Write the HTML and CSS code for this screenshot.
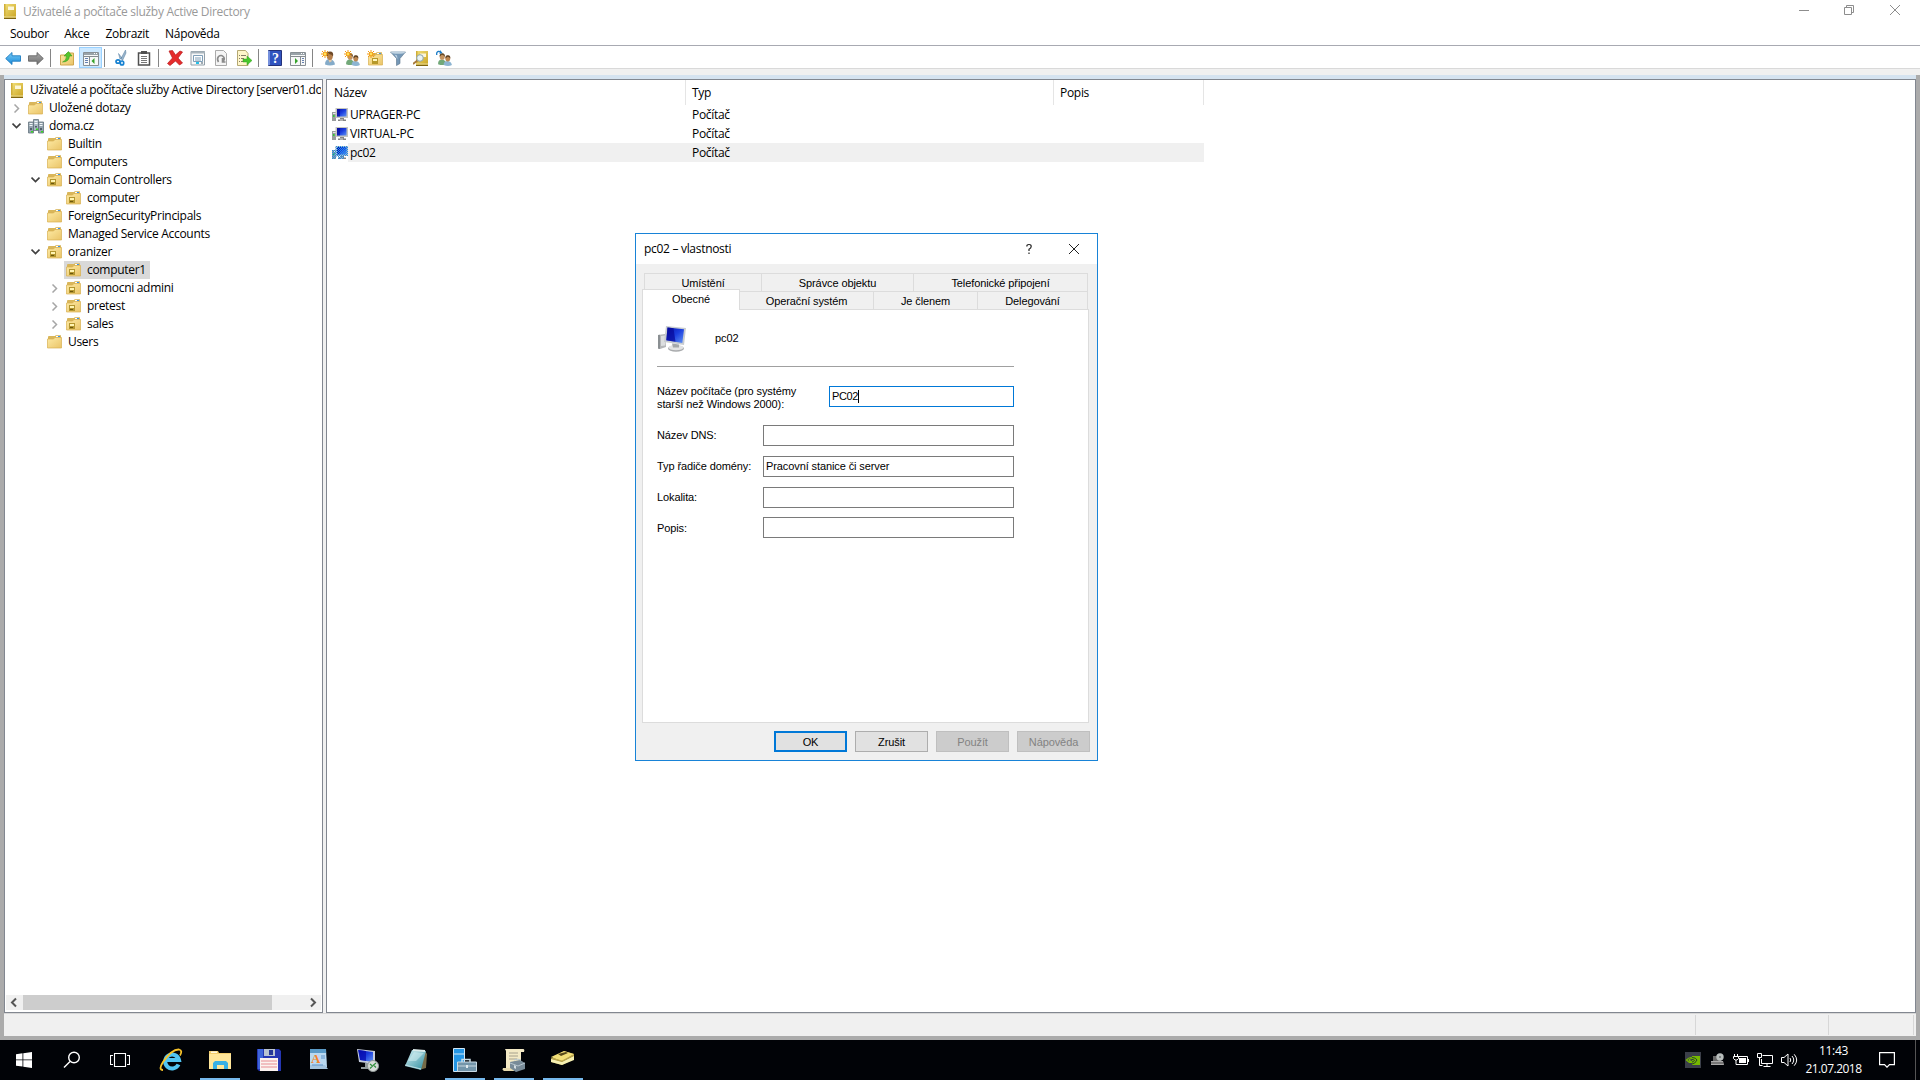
FILE: index.html
```html
<!DOCTYPE html>
<html lang="cs">
<head>
<meta charset="utf-8">
<title>Uživatelé a počítače služby Active Directory</title>
<link rel="stylesheet" href="styles.css">
</head>
<body>
<svg class="defs" width="0" height="0">
<defs>
<linearGradient id="gFolder" x1="0" y1="0" x2="1" y2="1"><stop offset="0" stop-color="#fdeaa4"/><stop offset="1" stop-color="#eac468"/></linearGradient>
<linearGradient id="gBook" x1="0" y1="0" x2="1" y2="1"><stop offset="0" stop-color="#f0dd75"/><stop offset="1" stop-color="#cda829"/></linearGradient>
<linearGradient id="gScreen" x1="0" y1="0" x2="1" y2="1"><stop offset="0" stop-color="#0712a8"/><stop offset=".5" stop-color="#1c3fe0"/><stop offset="1" stop-color="#5f92f2"/></linearGradient>
<linearGradient id="gBlue" x1="0" y1="0" x2="0" y2="1"><stop offset="0" stop-color="#7ccdf7"/><stop offset="1" stop-color="#1588d8"/></linearGradient>
<linearGradient id="gGray" x1="0" y1="0" x2="0" y2="1"><stop offset="0" stop-color="#a8a8a8"/><stop offset="1" stop-color="#6f6f6f"/></linearGradient>
<linearGradient id="gPad" x1="0" y1="0" x2="1" y2="1"><stop offset="0" stop-color="#d5f1f5"/><stop offset="1" stop-color="#2d8d9e"/></linearGradient>
<pattern id="pDots" width="2" height="2" patternUnits="userSpaceOnUse"><rect width="1" height="1" fill="#1e8cec"/><rect x="1" y="1" width="1" height="1" fill="#1e8cec"/></pattern>
</defs>
<symbol id="book" viewBox="0 0 12 15"><path d="M0 1h12v13.500H0z" fill="#a5861c"/><path d="M1 0h11v12.500H1z" fill="url(#gBook)"/><path d="M0 0h1.500v13H0z" fill="#cfae3a"/><path d="M4 2.500h6v3.500H4z" fill="#fbf6da"/><path d="M0 12.500h12v1H0z" fill="#fff0a5"/><path d="M0 14h12v1H0z" fill="#7e6410"/></symbol>
<symbol id="folder" viewBox="0 0 15 14"><path d="M1 3V2q0-1 1-1h6l1-1h4q1 0 1 1v12H1z" fill="#d9b65a"/><path d="M9 .8h4v1.500H9z" fill="#fff"/><path d="M11 1h2v1h-2z" fill="#3b93e8"/><path d="M.5 4h6l1.500-1.500h6.500v10.500H.5z" fill="url(#gFolder)" stroke="#d8b052" stroke-width=".7"/></symbol>
<symbol id="ou" viewBox="0 0 15 14"><use href="#folder" width="15" height="14"/><path d="M3 6h6v6H3z" fill="#b39630"/><path d="M4 7h4v2H4z" fill="#fff4b2"/><path d="M4 10h3v1H4z" fill="#6d570c"/></symbol>
<symbol id="domain" viewBox="0 0 16 15"><g stroke="#65737e" stroke-width=".8"><path d="M5.500.5h5v11h-5z" fill="#a9b8c2"/><path d="M.5 3h5v11h-5z" fill="#94a3ae"/><path d="M10.500 3h5v11h-5z" fill="#94a3ae"/></g><path d="M1.500 4.500h3M1.500 6.500h3M11.500 4.500h3M11.500 6.500h3M6.500 2.500h3M6.500 4.500h3" stroke="#f4f8fa"/><path d="M2 9h2v2H2zM12 9h2v2h-2zM7 7h2v1.500H7z" fill="#53606b"/><path d="M3 12h2v1.500H3zM13 12h2v1.500h-2zM8 9.500h2v1.500H8z" fill="#35d821"/></symbol>
<symbol id="pc" viewBox="0 0 16 14"><path d="M0 4h4v9H0z" fill="#989c9c"/><path d="M1 5h3v1H1z" fill="#e4e7e6"/><path d="M1 7h1.500v2H1z" fill="#30cc32"/><path d="M3.500 0H16v10H3.500z" fill="#c4c5bf"/><path d="M5 1h9.500v7.500H5z" fill="url(#gScreen)"/><path d="M5 1h3v7.500H5z" fill="#06069a" opacity=".6"/><path d="M8 10h4v1.500h2V13H6v-1.500h2z" fill="#858585"/><path d="M8 11.500h3v1H8z" fill="#ddd"/></symbol>
<symbol id="bigpc" viewBox="0 0 29 26"><path d="M0 9l7-1 1 13-6 2-2-.5z" fill="#b4b6b8"/><path d="M0 9l2-.3V23l-2-.5z" fill="#8a8f92"/><path d="M3 10l4-.6v10L3 20z" fill="#dcdedf"/><path d="M8 0l20 2-2 17L6 16z" fill="#c8ccd0"/><path d="M9.500 1.500L26 3.300 24.300 17 8.300 14.300z" fill="url(#gScreen)"/><path d="M9.500 1.500l6 .7 2 13.600-9.200-1.500z" fill="#070799" opacity=".7"/><ellipse cx="18" cy="22.500" rx="8" ry="3.300" fill="#a9abad"/><ellipse cx="18" cy="21.600" rx="7.500" ry="2.700" fill="#e2e3e4"/><path d="M14 17.500l7 1v3h-6z" fill="#a3a7aa"/></symbol>
<symbol id="panel" viewBox="0 0 16 14"><path d="M.5.500h15v13H.5z" fill="#f7f8f8" stroke="#888f94"/><path d="M1 1h14v2H1z" fill="#9aa3a9"/><path d="M11 1h1v1h-1zM13 1h1v1h-1z" fill="#fff"/><path d="M1 4.500h14" stroke="#858b90"/></symbol>
<symbol id="person" viewBox="0 0 12 14"><path d="M1 13q0-5 4-5.500 5 0 6 5.500-5 2-10 0z" fill="#84abc9"/><path d="M4 7h4l-.5 3-2 1z" fill="#e3c7a6"/><ellipse cx="5.800" cy="4.500" rx="3" ry="4" fill="#b47e4b"/><path d="M2.500 4Q2 0 6 0t3 5Q8 2.500 5 2.500L3 5z" fill="#6e4927"/></symbol>
<symbol id="people" viewBox="0 0 15 14"><path d="M0 12q0-5 4-5t5 5q-4 2-9 0z" fill="#72a878"/><ellipse cx="4.500" cy="4" rx="2.700" ry="3.400" fill="#c49360"/><path d="M1.800 4Q1.300.2 4.500.2t2.800 4Q6 2 4 2z" fill="#654a27"/><path d="M6 13q0-4.500 4-4.500t5 4.500q-4 2-9 0z" fill="#8cb4d1"/><ellipse cx="10.500" cy="6" rx="2.600" ry="3.200" fill="#bd8650"/><path d="M8 6q-.5-3.700 2.600-3.700T13.200 6q-1-2-3-2z" fill="#5e4225"/></symbol>
<symbol id="spark" viewBox="0 0 8 8"><path d="M4 0v8M0 4h8M1 1l6 6M7 1L1 7" stroke="#f39a14" stroke-width="1"/><circle cx="4" cy="4" r="2" fill="#f7a71c"/><circle cx="4" cy="4" r="1.200" fill="#ffe35c"/></symbol>
</svg>

<div class="window">
  <header class="titlebar">
    <svg class="app-icon" width="12" height="15"><use href="#book"/></svg>
    <span class="title">Uživatelé a počítače služby Active Directory</span>
    <svg class="caption-buttons" width="104" height="12" fill="none" stroke="#8d8d8d"><path d="M0 6.500h10M45.500 3.500h7v7h-7zM47.500 3V1.500h7v7H53M91 1l10 10M101 1L91 11"/></svg>
  </header>
  <nav class="menu"><span>Soubor</span><span class="akce">Akce</span><span>Zobrazit</span><span>Nápověda</span></nav>
  <div class="toolbar">
    <span class="tool"><svg width="16" height="16"><path d="M.7 8.500L7 2.500v3.300h8.500v5.400H7v3.300z" fill="url(#gBlue)" stroke="#1e7cc0" stroke-width=".9"/></svg></span>
    <span class="tool"><svg width="16" height="16"><path d="M15.300 8.500L9 2.500v3.300H.5v5.400H9v3.300z" fill="url(#gGray)" stroke="#666" stroke-width=".9"/></svg></span>
    <i class="sep"></i>
    <span class="tool"><svg width="16" height="16"><path d="M1.500 5h5l1.500-2h6.500v12h-13z" fill="url(#gFolder)" stroke="#d0a64c"/><path d="M3.500 12q4-1 4-6H5l4.500-4.500L13 6h-2.500q-.5 6-7 6z" fill="#54c52e" stroke="#299417" stroke-width=".5"/></svg></span>
    <span class="tool active"><svg width="16" height="16"><g transform="translate(0 2)"><use href="#panel" width="16" height="14"/><path d="M6.500 5v8" stroke="#858b90"/><path d="M2 6.500h3M2 8.500h3M2 10.500h3" stroke="#6680b0"/><path d="M11.500 6v6L8.500 9z" fill="#35a22a"/></g></svg></span>
    <i class="sep"></i>
    <span class="tool"><svg width="16" height="16"><path d="M12.500 0L8 8.500l1.500 2L13 3zM5.500 3.500L7 9l2-1z" fill="#9ab5cc" stroke="#557c9e" stroke-width=".5"/><g fill="none" stroke="#1681d1" stroke-width="1.700"><ellipse cx="5" cy="11.500" rx="2" ry="1.700"/><ellipse cx="9" cy="13" rx="1.700" ry="2"/></g></svg></span>
    <span class="tool"><svg width="16" height="16"><path d="M2.500 3h11v12h-11z" fill="#fff" stroke="#505050" stroke-width="1.500"/><path d="M5 1h6v3H5z" fill="#505050"/><path d="M5 6.500h6M5 8.500h6M5 10.500h6M5 12.500h6" stroke="#777"/></svg></span>
    <i class="sep"></i>
    <span class="tool"><svg width="16" height="16"><path d="M2 1l3.500-.5L8.500 5 13 1l2.500 1-4.500 6 4.500 5-3 2L8.500 11 3 15.500.5 13.500 5.500 8z" fill="#e52b2b" stroke="#b91a1d" stroke-width=".7"/></svg></span>
    <span class="tool"><svg width="16" height="16"><path d="M1 1.500h13.500v13.500H1z" fill="#f8f9fa" stroke="#929fa8"/><path d="M1 2.500h14" stroke="#a9b4bc" stroke-width="2"/><path d="M3.500 5.500h9v6h-9zM5 8h6M5 10h6" fill="#fff" stroke="#7f9fb8"/><path d="M6 13h3" stroke="#26c0e7" stroke-width="2"/><path d="M11 13h2" stroke="#9faab2" stroke-width="2"/></svg></span>
    <span class="tool"><svg width="16" height="16"><path d="M2.500.5h8L13.500 3.500v12h-11z" fill="#f5f5f5" stroke="#aaa"/><path d="M5.500 12Q3.500 9 5.500 6.500 8.500 4 11 7.500 12 10 9.500 11.500M9.500 8v4h3" fill="none" stroke="#8b8b8b" stroke-width="1.600"/></svg></span>
    <span class="tool"><svg width="16" height="16"><path d="M1.500.5h8L12 3.500v12H1.500z" fill="#fff6ca" stroke="#b5a873"/><path d="M3 5.500h1M5 5.500h5M3 8.500h1M5 8.500h3M3 11.500h1M5 11.500h3" stroke="#847c68"/><path d="M7 9h4V6l5 4.500-5 4.500v-3H7z" fill="#48c62c" stroke="#36a023" stroke-width=".5"/></svg></span>
    <i class="sep"></i>
    <span class="tool"><svg width="16" height="16"><path d="M1.500.5h13v15h-13z" fill="#3154bf" stroke="#24327a"/><path d="M1 1h2v14H1z" fill="#7590dd"/><text x="8.500" y="13" class="help-mark">?</text></svg></span>
    <span class="tool"><svg width="16" height="16"><g transform="translate(0 2)"><use href="#panel" width="16" height="14"/><path d="M10.500 5v8" stroke="#858b90"/><path d="M12 6.500h2M12 8.500h2M12 10.500h2" stroke="#6680b0"/><path d="M5 6v6l3-3z" fill="#35a22a"/></g></svg></span>
    <i class="sep"></i>
    <span class="tool"><svg width="16" height="16"><use href="#person" x="3" y="1" width="12" height="15"/><use href="#spark" x="0" y="0" width="8" height="8"/></svg></span>
    <span class="tool"><svg width="16" height="16"><use href="#people" x="2" y="3" width="14" height="13"/><use href="#spark" x="0" y="0" width="8" height="8"/></svg></span>
    <span class="tool"><svg width="16" height="16"><use href="#folder" x="1" y="2" width="15" height="14"/><path d="M5 8h6v6H5z" fill="#b69829"/><path d="M6 9h4v2H6z" fill="#fff5bd"/><use href="#spark" x="0" y="0" width="8" height="8"/></svg></span>
    <span class="tool"><svg width="16" height="16"><path d="M.5 2h15L10 8.500v5L6.500 15.500v-7z" fill="#7598b7" stroke="#59748c" stroke-width=".6"/><ellipse cx="8" cy="2.500" rx="7" ry="1.300" fill="#bfd2e1"/><path d="M7.500 9l-3-4.500L7 5.500z" fill="#c3d8e9"/></svg></span>
    <span class="tool"><svg width="16" height="16"><use href="#book" x="3" y="1" width="12" height="15"/><path d="M0 14l5-4" stroke="#a6793d" stroke-width="1.800"/><circle cx="7" cy="8" r="3.300" fill="#e8f2f4" stroke="#8fa4aa"/></svg></span>
    <span class="tool"><svg width="16" height="16"><use href="#people" x="2" y="3" width="14" height="13"/><path d="M.7 5V3q1-2.500 4-1" fill="none" stroke="#1c7cc6" stroke-width="1.300"/><path d="M4 0l2.500 3L3.500 4z" fill="#1c7cc6"/></svg></span>
  </div>
  <div class="rebar-gap"></div>

  <div class="workspace">
    <section class="tree">
      <ul class="nodes">
        <li class="root"><svg width="12" height="15"><use href="#book"/></svg><span>Uživatelé a počítače služby Active Directory [server01.do</span></li>
        <li class="l1"><svg class="closed"><path d="M1.500.5l4 4-4 4"/></svg><svg width="15" height="14"><use href="#folder"/></svg><span>Uložené dotazy</span></li>
        <li class="l1 dom"><svg class="open"><path d="M.5 1.500l4 4 4-4"/></svg><svg width="16" height="15"><use href="#domain"/></svg><span>doma.cz</span></li>
        <li class="l2"><svg width="15" height="14"><use href="#folder"/></svg><span>Builtin</span></li>
        <li class="l2"><svg width="15" height="14"><use href="#folder"/></svg><span>Computers</span></li>
        <li class="l2"><svg class="open"><path d="M.5 1.500l4 4 4-4"/></svg><svg width="15" height="14"><use href="#ou"/></svg><span>Domain Controllers</span></li>
        <li class="l3"><svg width="15" height="14"><use href="#ou"/></svg><span>computer</span></li>
        <li class="l2"><svg width="15" height="14"><use href="#folder"/></svg><span>ForeignSecurityPrincipals</span></li>
        <li class="l2"><svg width="15" height="14"><use href="#folder"/></svg><span>Managed Service Accounts</span></li>
        <li class="l2"><svg class="open"><path d="M.5 1.500l4 4 4-4"/></svg><svg width="15" height="14"><use href="#ou"/></svg><span>oranizer</span></li>
        <li class="l3 selected"><svg width="15" height="14"><use href="#ou"/></svg><span>computer1</span></li>
        <li class="l3"><svg class="closed"><path d="M1.500.5l4 4-4 4"/></svg><svg width="15" height="14"><use href="#ou"/></svg><span>pomocni admini</span></li>
        <li class="l3"><svg class="closed"><path d="M1.500.5l4 4-4 4"/></svg><svg width="15" height="14"><use href="#ou"/></svg><span>pretest</span></li>
        <li class="l3"><svg class="closed"><path d="M1.500.5l4 4-4 4"/></svg><svg width="15" height="14"><use href="#ou"/></svg><span>sales</span></li>
        <li class="l2"><svg width="15" height="14"><use href="#folder"/></svg><span>Users</span></li>
      </ul>
      <div class="scrollbar">
        <svg class="arrow" width="17" height="15"><path d="M10 3.500l-4 4 4 4"/></svg>
        <div class="track"><div class="thumb"></div></div>
        <svg class="arrow" width="17" height="15"><path d="M7 3.500l4 4-4 4"/></svg>
      </div>
    </section>
    <section class="list">
      <div class="row head"><span class="c1">Název</span><span class="c2">Typ</span><span class="c3">Popis</span></div>
      <div class="row"><span class="c1"><svg width="16" height="14"><use href="#pc"/></svg><b class="up">UPRAGER-PC</b></span><span class="c2">Počítač</span><span class="c3"></span></div>
      <div class="row"><span class="c1"><svg width="16" height="14"><use href="#pc"/></svg><b class="up">VIRTUAL-PC</b></span><span class="c2">Počítač</span><span class="c3"></span></div>
      <div class="row current"><span class="c1"><svg width="16" height="14"><use href="#pc"/><path d="M3.500 0H16v10h-4v3H6v-2.500H4V13H0V4h3.500z" fill="url(#pDots)"/></svg><b>pc02</b></span><span class="c2">Počítač</span><span class="c3"></span></div>
    </section>
  </div>
  <footer class="status"><i class="s1"></i><i class="s2"></i><i class="s3"></i></footer>
</div>

<div class="dialog">
  <div class="dialog-title"><span>pc02 – vlastnosti</span><svg width="54" height="12" fill="none" stroke="#222"><path d="M.8 3.500Q.8 1.500 3 1.500t2.200 2Q5.200 5 3 6.300V8M3 9.500V11" stroke-width="1.200"/><path d="M43 1l10 10M53 1L43 11"/></svg></div>
  <div class="dialog-body">
    <div class="tabs back"><span class="t1">Umístění</span><span class="t2">Správce objektu</span><span class="t3">Telefonické připojení</span></div>
    <div class="tabs front"><span class="on">Obecné</span><span class="t4">Operační systém</span><span class="t5">Je členem</span><span class="t6">Delegování</span></div>
    <div class="page">
      <div class="ident"><svg width="29" height="26"><use href="#bigpc"/></svg><span>pc02</span></div>
      <div class="field first"><label>Název počítače (pro systémy<br>starší než Windows 2000):</label><div class="input focus"><span>PC02</span><i class="caret"></i></div></div>
      <div class="field"><label>Název DNS:</label><div class="input"></div></div>
      <div class="field"><label>Typ řadiče domény:</label><div class="input">Pracovní stanice či server</div></div>
      <div class="field"><label>Lokalita:</label><div class="input"></div></div>
      <div class="field last"><label>Popis:</label><div class="input"></div></div>
    </div>
    <div class="buttons"><span class="btn ok">OK</span><span class="btn">Zrušit</span><span class="btn off">Použít</span><span class="btn off">Nápověda</span></div>
  </div>
</div>

<div class="taskbar">
  <div class="start-area">
    <span class="task"><svg width="16" height="16" fill="#fff"><path d="M0 2.300L6.500 1.300v6.200H0zM7.300 1.200L16 0v7.500H7.300zM0 8.300h6.500v6.300L0 13.700zM7.300 8.300H16V16l-8.700-1.200z"/></svg></span>
    <span class="task"><svg width="18" height="18" fill="none" stroke="#fff" stroke-width="1.400"><circle cx="11" cy="6.500" r="5.300"/><path d="M7 10.500L1 16.500"/></svg></span>
    <span class="task"><svg width="20" height="16" fill="none" stroke="#fff"><path d="M4.500 1.500h11v13h-11zM3 3.500H.5v9H3M17 3.500h2.500v9H17" stroke-width="1.100"/></svg></span>
  </div>
  <div class="pinned">
    <span class="task"><svg width="24" height="24"><path d="M19.500 16.500A7 7 0 1 1 20 12H8" fill="none" stroke="#51c5f3" stroke-width="4"/><path d="M4 22Q-1 22 4 14 13 1 20 1.500q4 1 1 6" fill="none" stroke="#f7c32b" stroke-width="1.800"/></svg></span>
    <span class="task run"><svg width="24" height="24"><path d="M1 3h9l1 2h12v16H1z" fill="#f3cd6c"/><path d="M1 6h22v15H1z" fill="#ffe69a"/><path d="M3 3.500h6v1.500H3z" fill="#fff8df"/><path d="M5 21v-6l2-2h11l2 2v6h-4v-4H9v4z" fill="#38b0e5"/></svg></span>
    <span class="task"><svg width="24" height="24"><path d="M0 1h22l2 2v20H2l-2-2z" fill="#2536b2"/><path d="M1 1h5v20H1z" fill="#3e65da"/><path d="M7 1h11v7H7z" fill="#b9c3d1"/><path d="M12 2h4v5h-4z" fill="#253796"/><path d="M3 10h18v13H3z" fill="#fbf2ef"/><path d="M4 13h16M4 16h16M4 19h16" stroke="#e78c91"/></svg></span>
    <span class="task"><svg width="24" height="24"><path d="M4 1h16l1 18H4z" fill="#b9d8f0"/><path d="M4 1h16v4H4z" fill="#5a9ac7"/><path d="M4 17h15l3 4H4z" fill="#a4c4de"/><path d="M15 8h4M15 10h4M6 17h11" stroke="#5f92c8"/><text x="5" y="15" class="letter">A</text></svg></span>
    <span class="task"><svg width="24" height="24"><path d="M2 1l18 2v13L4 14z" fill="#c6cddd"/><path d="M3 2l15 2v10L5 12z" fill="url(#gScreen)"/><path d="M4 2l7 1v10l-6-1z" fill="#0508ae" opacity=".7"/><path d="M10 15h5v3h3v3H6v-2h4z" fill="#929b9e"/><circle cx="18" cy="18" r="5.500" fill="#d8dcda" stroke="#929a99"/><path d="M15 16l2.500 2L15 20.500M21 15l-2.500 2 2.500 2.500" fill="none" stroke="#2f8f3b" stroke-width="1.200"/></svg></span>
    <span class="task"><svg width="24" height="24"><path d="M21 3l2 3-1 14-7 2z" fill="#756b48"/><path d="M8 2l14 1-5 19-16-4z" fill="url(#gPad)"/><path d="M9 2l12 1" stroke="#dcebea" stroke-width="2"/><path d="M10 4l10 1-8 8-8 0z" fill="#d9f2f4" opacity=".5"/><path d="M1 17l16 4" stroke="#bedde1"/></svg></span>
    <span class="task run"><svg width="24" height="24"><path d="M.5.500h11v23H.500z" fill="#2496e5" stroke="#d2e7f5"/><path d="M1 6h10" stroke="#d2e7f5"/><path d="M9 14v-2.500h8V14" fill="none" stroke="#c7dce6" stroke-width="1.500"/><path d="M4.500 14h19v9.500h-19z" fill="#7395aa" stroke="#c9dae4"/><path d="M5 18h18" stroke="#c6d6df"/><path d="M13 17h2v3h-2z" fill="#e1ebf0"/></svg></span>
    <span class="task run"><svg width="24" height="24"><path d="M3 1h18q2 0 1 3h-3v16H4V3z" fill="#f3e9c5"/><path d="M1 20h11v3H2q-2-1-1-3z" fill="#e6d9ac"/><path d="M7 5h9M7 8h9M7 11h8" stroke="#a6a08d"/><path d="M8 14l10-2 5 3v6l-9 3-6-4z" fill="#788b98"/><path d="M8 15l8 3 7-3M12 12l3-1 4 1" fill="none" stroke="#b8c7d0"/><path d="M12 17l2 1v3l-2-1z" fill="#d3dde2"/></svg></span>
    <span class="task run"><svg width="24" height="24"><g transform="translate(0 -1)"><path d="M0 12l13-8 10 3v5L11 18 0 15z" fill="#a69142"/><path d="M0 10l13-6 10 3-12 7z" fill="#f2df78"/><path d="M0 12l11 3v3L0 15zM11 15l12-6v4l-12 5z" fill="#f6f0b2"/><path d="M7 7l8-2 2 1-7 3z" fill="#57491a"/><path d="M0 11l11 3 12-6" fill="none" stroke="#bfab4e"/></g></svg></span>
  </div>
  <div class="tray">
    <svg width="16" height="16"><path d="M0 0h16v16H0z" fill="#3b3f49"/><path d="M7 4h8v9H7z" fill="#76b900"/><path d="M1.500 8Q6 3 10.500 8 6 13 1.500 8zM4 8q3-3 5 0-2 3-5 0" fill="none" stroke="#76b900" stroke-width="1.200"/><path d="M7 5.500q4 0 5 2.500-2 4-5 4M7 7.500q2 0 2.500.8-1 1.700-2.500 1.700" fill="none" stroke="#29402a"/></svg>
    <svg width="16" height="16"><g transform="translate(1)"><path d="M3 4h8v6H3z" fill="#686868"/><path d="M1 9h12l1 4H1z" fill="#aaa"/><path d="M1 11h12" stroke="#444"/><circle cx="10" cy="5" r="3.700" fill="#b8bebd"/><circle cx="10" cy="5" r="1" fill="#696f6f"/></g></svg>
    <svg width="16" height="16"><path d="M5 4.500h9.500v8H5" fill="none" stroke="#fff"/><path d="M6 6h7v5H6zM15 7h1v3h-1z" fill="#fff"/><path d="M1.500 2v3M4.500 2v3M3 8v4.500h3" stroke="#fff" fill="none"/><path d="M.5 4.500h5v2L4 8H2L.5 6.500z" fill="#000" stroke="#fff"/></svg>
    <svg width="16" height="16" fill="none" stroke="#fff"><path d="M5.500 3.500h10v8h-11V7M10 12v2.500M6.500 14.500h7M.500 1.500h4v4h-4zM2.500 6v7.500h3"/></svg>
    <svg width="17" height="16" fill="none" stroke="#fff"><path d="M.5 5.500h2.500L7 2v12L3 10.500H.5zM9 6q1.500 2 0 4M11 4q3.500 4 0 8M13.200 2.300q5 5.700 0 11.400"/></svg>
    <div class="clock"><span class="time">11:43</span><span class="date">21.07.2018</span></div>
    <svg class="notice" width="16" height="16" fill="none" stroke="#fff"><path d="M.6.600h14.800v12H10.500v0L8 15.200 5.500 12.600H.6z" stroke-width="1.200"/></svg>
    <i class="peek"></i>
  </div>
</div>
</body>
</html>
```
FILE: styles.css
```css
* { box-sizing: border-box; }
body { margin: 0; width: 1920px; height: 1080px; overflow: hidden; background: #fff; color: #000; font: 12px/18px "Open Sans", "Noto Sans", sans-serif; letter-spacing: -.3px; display: flex; flex-direction: column; white-space: nowrap; }
.defs { position: absolute; }
svg { flex: none; display: block; }
i { display: block; flex: none; }
b { font-weight: normal; }

.window { height: 1040px; display: flex; flex-direction: column; }
.titlebar { height: 24px; display: flex; align-items: flex-start; padding: 4px 0 0 4px; color: #999; }
.title { padding-left: 7px; margin-top: -1px; flex: 1; }
.caption-buttons { margin-right: 17px; }
.menu { height: 22px; padding: 1px 0 0 10px; display: flex; gap: 16px; border-bottom: 1px solid #a8aab2; }
.akce { margin-left: -.5px; }
.toolbar { height: 23px; display: flex; padding: 1px 0 0 2px; border-bottom: 1px solid #d9d9d9; }
.tool { width: 23px; height: 21px; display: flex; align-items: center; padding-left: 3px; }
.active { background: #cce8ff; border: 1px solid #99d1ff; }
.sep { width: 8px; height: 18px; margin-top: 2px; background: linear-gradient(#858585, #858585) 2px 0 / 1px 18px no-repeat; }
.help-mark { font: bold 14px "Liberation Serif", serif; fill: #fff; text-anchor: middle; letter-spacing: 0; }
.rebar-gap { height: 6px; background: #f0f0f0; }

.workspace { height: 938px; padding-top: 4px; display: flex; gap: 3px; background: #f0f0f0; border: solid #ababab; border-width: 0 4px; box-shadow: inset 0 4px #d5e3f0; }
.tree { width: 319px; height: 934px; border: 1px solid #828790; background: #fff; display: flex; flex-direction: column; justify-content: space-between; padding: 1px; }
.nodes { margin: 0; padding: 0; list-style: none; overflow: hidden; }
.nodes li { height: 18px; width: max-content; display: flex; align-items: center; }
.root { padding-left: 5px; gap: 7px; letter-spacing: -.37px; }
.l1, .l2, .l3 { gap: 6px; padding-right: 4px; }
.l1 { margin-left: 22px; }
.dom svg + svg { margin-left: 1px; }
.dom { gap: 5px; }
.l2 { margin-left: 41px; }
.l3 { margin-left: 58px; padding-left: 2px; }
.nodes .open, .nodes .closed { width: 9px; height: 9px; fill: none; stroke: #404040; stroke-width: 1.7; margin-left: -15px; }
.nodes .open { margin-left: -16px; margin-right: 1px; }
.nodes .closed { stroke: #a6a6a6; stroke-width: 1.5; }
.selected { background: #d9d9d9; }
.scrollbar { height: 15px; display: flex; background: #f0f0f0; margin-bottom: 1px; }
.arrow { fill: none; stroke: #555; stroke-width: 2; }
.track { flex: 1; }
.thumb { width: 249px; height: 15px; background: #cdcdcd; }

.list { flex: 1; height: 934px; border: 1px solid #828790; background: #fff; }
.row { display: flex; height: 19px; align-items: center; }
.row > span { display: flex; align-items: center; gap: 2px; height: 100%; }
.c1 { width: 359px; padding-left: 5px; }
.c2 { width: 368px; padding-left: 6px; }
.c3 { width: 150px; padding-left: 6px; }
.up { letter-spacing: -.2px; }
.head { height: 25px; }
.head > span { border-right: 1px solid #e5e5e5; }
.head .c1 { padding-left: 7px; }
.current { width: 877px; background: linear-gradient(90deg, #fff 21px, #f0f0f0 21px); }

.status { height: 27px; background: #f0f0f0; border: solid #ababab; border-width: 0 4px 4px; display: flex; justify-content: flex-end; padding-top: 2px; box-shadow: inset 0 1px #d7d7d7; }
.status i { height: 20px; border-right: 1px solid #d7d7d7; }
.s2 { width: 133px; }
.s3 { width: 85px; margin-right: 2px; }

.dialog { position: absolute; left: 635px; top: 233px; width: 463px; height: 528px; border: 1px solid #1883d7; background: #f0f0f0; font: 11px/13px "Liberation Sans", Arial, sans-serif; letter-spacing: -.1px; }
.dialog-title { height: 30px; background: #fff; display: flex; align-items: center; justify-content: space-between; padding: 0 17px 0 8px; font: 12px/18px "Open Sans", sans-serif; letter-spacing: -.3px; }
.dialog-body { padding: 9px 7px 0 6px; }
.tabs { display: flex; }
.tabs span { height: 18px; border: solid #dcdcdc; border-width: 1px 1px 0 0; text-align: center; padding-top: 3px; }
.back { padding-left: 2px; }
.back .t1 { width: 118px; border-left-width: 1px; }
.t2 { width: 152px; }
.t3 { width: 174px; }
.front .on { width: 98px; height: 21px; margin: -2px 0 -1px; background: #fff; border-left-width: 1px; position: relative; z-index: 1; }
.t4 { width: 134px; }
.t5 { width: 104px; }
.t6 { width: 110px; }
.page { height: 414px; width: 447px; background: #fff; border: 1px solid #dcdcdc; padding-left: 14px; }
.ident { height: 57px; width: 357px; display: flex; align-items: center; gap: 28px; padding: 2px 0 0 1px; border-bottom: 1px solid #a0a0a0; }
.ident span { margin-top: -1px; }
.field { display: flex; align-items: flex-start; width: 357px; height: 31px; }
.field label { width: 106px; padding-top: 4px; }
.input { flex: 1; height: 21px; border: 1px solid #7a7a7a; background: #fff; padding: 3px 2px; }
.first { margin-top: 19px; height: 39px; }
.first label { width: 172px; padding-top: 0; margin-top: -1px; }
.focus { border-color: #0078d7; display: flex; letter-spacing: -.4px; }
.caret { width: 1px; height: 13px; background: #000; }
.last { margin-top: -1px; }
.last label { padding-top: 5px; }
.buttons { display: flex; justify-content: flex-end; gap: 8px; padding-top: 8px; }
.btn { width: 73px; height: 21px; border: 1px solid #adadad; background: #e1e1e1; text-align: center; line-height: 20px; }
.ok { border: 2px solid #0078d7; line-height: 18px; }
.off { background: #ccc; border-color: #bfbfbf; color: #838383; }

.taskbar { height: 40px; background: #010307; display: flex; color: #fff; }
.start-area { display: flex; width: 147px; }
.pinned { display: flex; gap: 1px; flex: 1; }
.task { width: 48px; display: flex; align-items: center; justify-content: center; }
.start-area .task { flex: none; }
.run { background: linear-gradient(#76b9ed, #76b9ed) center bottom / 40px 2px no-repeat; }
.letter { font: bold 13px "Liberation Serif", serif; fill: #f5822a; letter-spacing: 0; }
.tray { display: flex; align-items: center; gap: 8px; }
.clock { display: flex; flex-direction: column; align-items: center; width: 57px; margin: 0 9px 0 -1px; }
.date { letter-spacing: -.5px; }
.peek { width: 5px; height: 40px; border-left: 1px solid #555; margin-left: 12px; }
```
